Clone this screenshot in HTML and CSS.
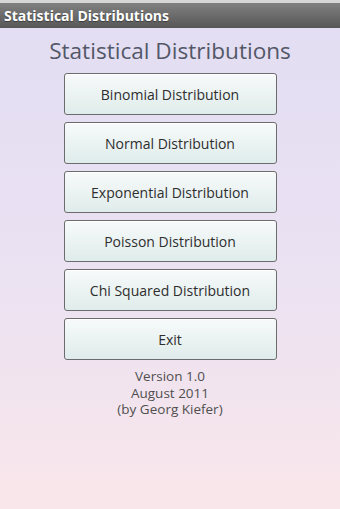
FILE: index.html
```html
<!DOCTYPE html>
<html>
<head>
<meta charset="utf-8">
<link rel="stylesheet" href="styles.css">
</head>
<body>
<div class="strip"></div>
<div class="titlebar">Statistical Distributions</div>
<main class="content">
  <h1 class="heading">Statistical Distributions</h1>
  <div class="buttons">
    <button class="btn">Binomial Distribution</button>
    <button class="btn">Normal Distribution</button>
    <button class="btn">Exponential Distribution</button>
    <button class="btn">Poisson Distribution</button>
    <button class="btn">Chi Squared Distribution</button>
    <button class="btn">Exit</button>
  </div>
  <div class="version">Version 1.0<br>August 2011<br>(by Georg Kiefer)</div>
</main>
</body>
</html>
```
FILE: styles.css
```css
html, body {
  margin: 0;
  padding: 0;
  height: 100%;
}
body {
  width: 340px;
  height: 509px;
  overflow: hidden;
  font-family: "Open Sans", "DejaVu Sans", sans-serif;
  background: linear-gradient(to bottom, #e2ddf3 0%, #ebe2f2 55%, #f9e6ea 100%);
}
.strip {
  height: 3px;
  background: #d6d6d6;
}
.titlebar {
  height: 25px;
  line-height: 25px;
  padding-left: 4px;
  color: #ffffff;
  font-weight: bold;
  font-size: 14px;
  background: linear-gradient(to bottom, #808080, #575757);
  text-shadow: 0 1px 1px rgba(0,0,0,0.4);
  box-sizing: border-box;
}
.content {
  display: flex;
  flex-direction: column;
  align-items: center;
}
.heading {
  margin: 8px 0 0 0;
  height: 37px;
  line-height: 30px;
  font-size: 22.6px;
  font-weight: normal;
  color: #535868;
}
.buttons {
  display: flex;
  flex-direction: column;
  gap: 7px;
}
.btn {
  width: 213px;
  height: 42px;
  margin: 0;
  padding: 0;
  border: 1.5px solid #6c6c6c;
  border-radius: 3px;
  background: linear-gradient(to bottom, #f7fafa, #dfeceb);
  font-family: "Open Sans", "DejaVu Sans", sans-serif;
  font-size: 14px;
  color: #2e2e2e;
  box-shadow: inset 0 1px 0 #ffffff;
}
.version {
  margin-top: 8px;
  text-align: center;
  font-size: 13.5px;
  line-height: 16.5px;
  color: #4f4f4f;
}
```
